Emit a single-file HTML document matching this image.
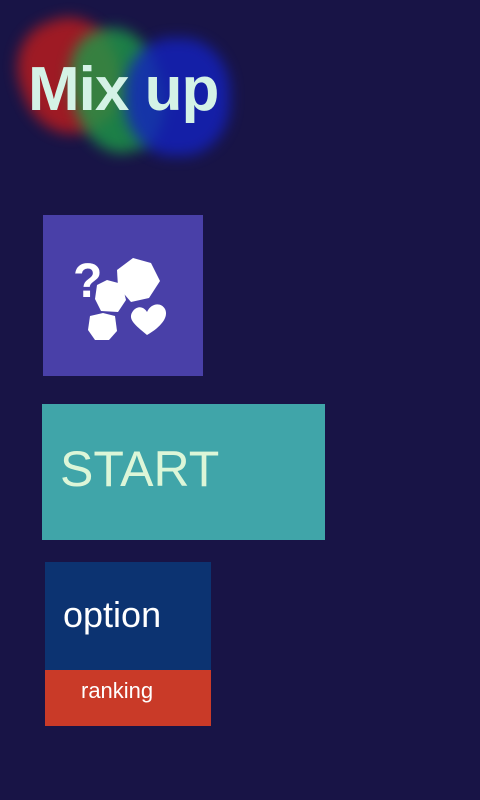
<!DOCTYPE html>
<html><head><style>
html,body{margin:0;padding:0}
body{width:480px;height:800px;background:#181446;position:relative;overflow:hidden;font-family:"Liberation Sans",sans-serif}
.blob{position:absolute;border-radius:45%;filter:blur(7px)}
.title{position:absolute;left:28px;top:54px;font-size:62px;font-weight:bold;color:#d4f2e6;font-family:"Liberation Sans",sans-serif;letter-spacing:-1px}
.b{position:absolute}
</style></head><body>
<div class="blob" style="left:20px;top:18px;width:100px;height:115px;background:#c01c1c;opacity:.8;transform:rotate(-20deg)"></div>
<div class="blob" style="left:72px;top:28px;width:90px;height:125px;background:#1d9a48;opacity:.8;transform:rotate(-15deg)"></div>
<div class="blob" style="left:125px;top:38px;width:105px;height:118px;background:#1422c0;opacity:.8"></div>
<div class="title">Mix up</div>
<div class="b" style="left:43px;top:215px;width:160px;height:161px;background:#4940a8">
<svg width="160" height="161" viewBox="0 0 160 161">
<text x="30" y="82" font-size="48" font-weight="bold" fill="#fff" font-family="Liberation Sans">?</text>
<polygon fill="#fff" points="90,43 108,48 117,66 106,83 88,87 75,72 74,55"/>
<polygon fill="#fff" points="64,65 79,69 83,85 75,97 58,96 52,84 54,70"/>
<polygon fill="#fff" points="60,98 72,101 74,116 66,125 52,125 45,115 47,101"/>
<path fill="#fff" d="M104,120 C92,110 84,104 90,96 C95,90 101,92 104,97 C108,88 118,87 122,94 C126,102 118,112 104,120Z"/>
</svg></div>
<div class="b" style="left:42px;top:404px;width:283px;height:136px;background:#40a5a9"><div style="position:absolute;left:18px;top:36px;font-size:50px;color:#dcf6d8">START</div></div>
<div class="b" style="left:45px;top:562px;width:166px;height:108px;background:#0c3371"><div style="position:absolute;left:18px;top:32px;font-size:36px;color:#fff">option</div></div>
<div class="b" style="left:45px;top:670px;width:166px;height:56px;background:#c93a28"><div style="position:absolute;left:36px;top:8px;font-size:22px;color:#fff">ranking</div></div>
</body></html>
